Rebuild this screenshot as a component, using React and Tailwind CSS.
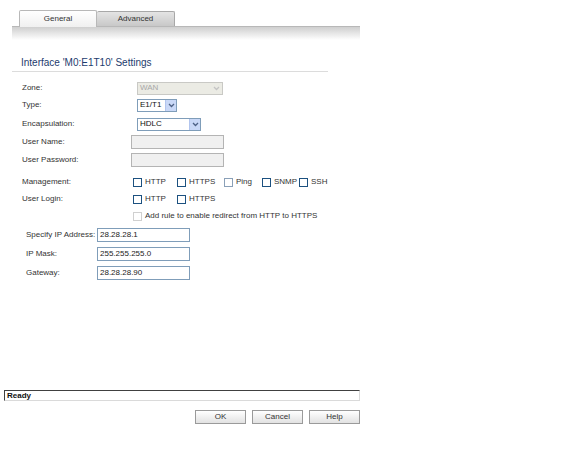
import React from "react"

// little XP style drop arrow
function DropArrow({ disabled }) {
  return (
    <span className={`flex h-full w-[11px] items-center justify-center ${disabled ? "" : "bg-[#c9d8f7] border-l border-[#b2c5ee]"}`}>
      <svg width="7" height="5" viewBox="0 0 7 5">
        <path d="M1 1 L3.5 3.5 L6 1" fill="none" stroke={disabled ? "#c4c4c4" : "#4d6185"} strokeWidth="1.3" />
      </svg>
    </span>
  )
}

function Select({ value, width, disabled }) {
  return (
    <div
      className={`flex h-[13px] items-center border ${disabled ? "border-[#c9c9c5] bg-[#ebebe4] text-[#a8a8a8]" : "border-[#7f9db9] bg-white text-[#111]"}`}
      style={{ width }}
    >
      <span className="flex-1 pl-[2px] leading-none">{value}</span>
      <DropArrow disabled={disabled} />
    </div>
  )
}

function Check({ label, faded }) {
  return (
    <label className="flex items-center">
      <span className={`h-[9px] w-[9px] border bg-white ${faded ? "border-[#8aa0b8]" : "border-[#1c5180]"}`} />
      <span className="ml-[3px] text-[#333]">{label}</span>
    </label>
  )
}

function Row({ label, mt, children }) {
  return (
    <div className="flex h-[14px] items-center" style={{ marginTop: mt }}>
      <div className="w-[109px] shrink-0 text-[#333]">{label}</div>
      {children}
    </div>
  )
}

function IpRow({ label, value, mt }) {
  return (
    <div className="flex h-[14px] items-center pl-[4px]" style={{ marginTop: mt }}>
      <div className="w-[71px] shrink-0 text-[#333]">{label}</div>
      <div className="flex h-[14px] w-[93px] items-center border border-[#7f9db9] bg-white pl-[2px] text-[#222]">
        {value}
      </div>
    </div>
  )
}

export default function App() {
  return (
    <div className="h-[464px] w-[576px] overflow-hidden bg-white text-[8px] leading-none" style={{ fontFamily: '"Liberation Sans", Arial, sans-serif' }}>
      {/* tabs */}
      <div className="ml-[12px] w-[348px] pt-[10px]">
        <div className="flex items-end pl-[7px]">
          <div className="relative z-10 -mb-px flex h-[17px] w-[78px] items-center justify-center rounded-t-[2px] border border-b-0 border-[#b8b8b8] bg-gradient-to-b from-[#ffffff] to-[#f0f0f0] text-[#333]">
            General
          </div>
          <div className="flex h-[15px] w-[78px] items-center justify-center rounded-t-[2px] border border-b-0 border-l-0 border-[#a8a8a8] bg-gradient-to-b from-[#e4e4e4] to-[#c8c8c8] text-[#333]">
            Advanced
          </div>
        </div>
        <div className="h-[14px] border-t border-[#b8b8b8] bg-gradient-to-b from-[#cfcfcf] to-[#ffffff]" />
      </div>

      {/* heading */}
      <div className="ml-[12px] mt-[18px] w-[316px] border-b border-[#dcdcdc] pb-[3px] pl-[9px] text-[10px] text-[#1d3c6e]">
        Interface 'M0:E1T10' Settings
      </div>

      {/* form */}
      <div className="ml-[22px] mt-[9px]">
        <Row label="Zone:" mt={0}>
          <div className="ml-[6px]"><Select value="WAN" width={86} disabled /></div>
        </Row>
        <Row label="Type:" mt={3}>
          <div className="ml-[6px]"><Select value="E1/T1" width={40} /></div>
        </Row>
        <Row label="Encapsulation:" mt={5}>
          <div className="ml-[6px]"><Select value="HDLC" width={64} /></div>
        </Row>
        <Row label="User Name:" mt={4}>
          <div className="h-[14px] w-[93px] border border-[#b4b4b4] bg-[#f0f0f0]" />
        </Row>
        <Row label="User Password:" mt={4}>
          <div className="h-[14px] w-[93px] border border-[#b4b4b4] bg-[#f0f0f0]" />
        </Row>
        <Row label="Management:" mt={8}>
          <div className="ml-[2px] flex items-center">
            <div className="w-[44px]"><Check label="HTTP" /></div>
            <div className="w-[47px]"><Check label="HTTPS" /></div>
            <div className="w-[38px]"><Check label="Ping" faded /></div>
            <div className="w-[37px]"><Check label="SNMP" /></div>
            <Check label="SSH" />
          </div>
        </Row>
        <Row label="User Login:" mt={3}>
          <div className="ml-[2px] flex items-center">
            <div className="w-[44px]"><Check label="HTTP" /></div>
            <Check label="HTTPS" />
          </div>
        </Row>
        <Row label="" mt={3}>
          <label className="ml-[2px] flex items-center">
            <span className="h-[9px] w-[9px] border border-[#d0d0d0] bg-white" />
            <span className="ml-[3px] text-[#333]">Add rule to enable redirect from HTTP to HTTPS</span>
          </label>
        </Row>

        <IpRow label="Specify IP Address:" value="28.28.28.1" mt={5} />
        <IpRow label="IP Mask:" value="255.255.255.0" mt={5} />
        <IpRow label="Gateway:" value="28.28.28.90" mt={5} />
      </div>

      {/* status */}
      <div className="ml-[4px] mt-[110px] flex h-[11px] w-[356px] items-center border border-b-[#dadada] border-l-[#404040] border-r-[#dadada] border-t-[#404040] pl-[2px] font-bold text-[#111]">
        Ready
      </div>

      {/* buttons */}
      <div className="ml-[195px] mt-[9px] flex w-[165px] justify-between">
        {["OK", "Cancel", "Help"].map((b) => (
          <button
            key={b}
            className="flex h-[14px] w-[51px] items-center justify-center border border-[#9a9a9a] bg-gradient-to-b from-[#ffffff] to-[#e2e2e2] text-[#333]"
          >
            {b}
          </button>
        ))}
      </div>
    </div>
  )
}
